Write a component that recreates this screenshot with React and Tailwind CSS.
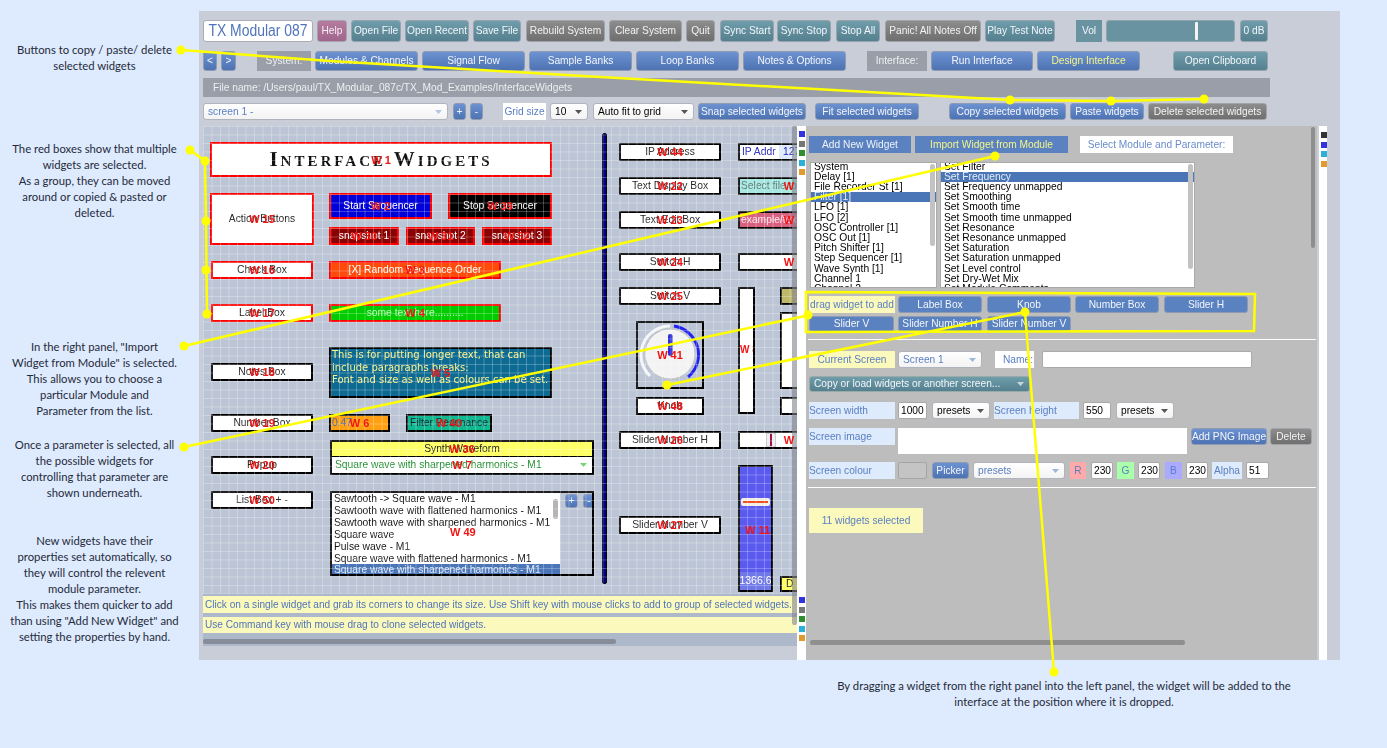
const blueBtn = "flex items-center justify-center h-full rounded-[3px] border border-[#8f9bb3] bg-linear-to-b from-[#6d92d2] to-[#4e73b3] text-[#f2f5fb] whitespace-nowrap";
const tealBtn = "flex items-center justify-center h-full rounded-[3px] border border-[#97a3ae] bg-linear-to-b from-[#6f9daa] to-[#55808f] text-[#f2f5fb] whitespace-nowrap";
const greyBtn = "flex items-center justify-center h-full rounded-[3px] border border-[#a0a3a8] bg-linear-to-b from-[#8d8d8d] to-[#6f6f6f] text-[#f2f2f2] whitespace-nowrap";
const flatBtn = "flex items-center justify-center h-full bg-[#5a82c0] text-[#eef2f9] whitespace-nowrap";
const tag = "flex items-center h-full bg-[#deebfc] text-[#5a7fc2] whitespace-nowrap";
const input = "flex items-center h-full bg-white rounded-[2px] border border-[#a9a9a9] text-black pl-[2px]";

function Arrow({ color = "#555" }) {
  return (
    <svg width="7" height="4" viewBox="0 0 7 4" className="absolute right-[5px] top-1/2 -translate-y-1/2">
      <path d="M0 0h7L3.5 4z" fill={color} />
    </svg>
  );
}

function Select({ className, text, textClass = "text-black", arrow }) {
  return (
    <div className={`relative flex items-center h-full bg-linear-to-b from-white to-[#f3f3f3] rounded-[3px] border border-[#b0b4bc] pl-[4px] whitespace-nowrap ${className} ${textClass}`}>
      {text}
      <Arrow color={arrow} />
    </div>
  );
}

// widget on the design canvas, with its red id label centred on top
function Widget({ className, label, children, labelClass = "" }) {
  return (
    <div className={`absolute flex items-center justify-center overflow-hidden whitespace-nowrap ${className}`}>
      {children}
      <span className={`absolute z-20 left-0 right-0 text-center top-1/2 -translate-y-1/2 text-[11px] font-bold leading-none whitespace-nowrap text-[#f01414] ${labelClass}`}>{label}</span>
    </div>
  );
}

const nameBox = "bg-white text-[#222] border-2 border-black rounded-[1px] w-[102px] h-[18px]";
const picked = "border-2 border-[#ff0000]";

function Canvas() {
  return (
    <div className="relative h-[468px] bg-[#bcc5d5] overflow-hidden text-[10.3px]">
      {/* left column */}
      <Widget className={`left-[7px] top-[16px] w-[342px] h-[35px] bg-white ${picked}`} label="W 1">
        <span className="font-['Liberation_Serif',serif] font-bold text-[21px] tracking-[3px] text-[#111] [font-variant:small-caps]">Interface Widgets</span>
      </Widget>
      <Widget className={`left-[7px] top-[67px] w-[104px] h-[52px] bg-white text-[#222] ${picked}`} label="W 15">Action Buttons</Widget>
      <Widget className={`left-[126px] top-[67px] w-[103px] h-[26px] bg-[#0000d8] text-white ${picked}`} label="W 2">Start Sequencer</Widget>
      <Widget className={`left-[245px] top-[67px] w-[104px] h-[26px] bg-black text-white ${picked}`} label="W 39">Stop Sequencer</Widget>
      <Widget className={`left-[126px] top-[101px] w-[70px] h-[18px] bg-[#8b0000] text-white ${picked}`} label="W 30">snapshot 1</Widget>
      <Widget className={`left-[203px] top-[101px] w-[69px] h-[18px] bg-[#8b0000] text-white ${picked}`} label="W 31">snapshot 2</Widget>
      <Widget className={`left-[279px] top-[101px] w-[70px] h-[18px] bg-[#8b0000] text-white ${picked}`} label="W 32">snapshot 3</Widget>
      <Widget className={`left-[8px] top-[135px] w-[102px] h-[18px] bg-white text-[#222] ${picked}`} label="W 16">Check Box</Widget>
      <Widget className={`left-[126px] top-[135px] w-[172px] h-[18px] bg-[#ff4a0a] text-white ${picked}`} label="W 3">[X] Random Sequence Order</Widget>
      <Widget className={`left-[8px] top-[178px] w-[102px] h-[18px] bg-white text-[#222] ${picked}`} label="W 17">Label Box</Widget>
      <Widget className={`left-[126px] top-[178px] w-[172px] h-[18px] bg-[#00cc00] text-[#b8f5b8] ${picked}`} label="W 4">some text here..........</Widget>
      <Widget className={`left-[8px] top-[237px] ${nameBox}`} label="W 18">Notes Box</Widget>
      <Widget className="left-[126px] top-[221px] w-[223px] h-[51px] bg-[#0d6a92] text-[#fdf18a] border-2 border-black !items-start !justify-start" label="W 5">
        <div className="font-['DejaVu_Sans',sans-serif] text-[10px] leading-[12.7px] pl-[1px]">
          This is for putting longer text, that can<br />include paragraphs breaks:<br />Font and size as well as colours can be set.
        </div>
      </Widget>
      <Widget className={`left-[8px] top-[288px] ${nameBox}`} label="W 19">Number Box</Widget>
      <Widget className="left-[126px] top-[288px] w-[61px] h-[18px] bg-[#ffa012] text-[#3f6fb0] border-2 border-black !justify-start" label="W 6">
        <span className="pl-[1px]">0.47</span>
      </Widget>
      <Widget className="left-[203px] top-[288px] w-[86px] h-[18px] bg-[#10b890] text-[#123] border-2 border-black" label="W 40">Filter Resonance</Widget>
      <div className="absolute left-[127px] top-[314px] w-[264px] h-[35px] border-2 border-black flex flex-col">
        <Widget className="left-0 top-0 w-full h-[15px] bg-[#ffff66] text-[#222] border-b border-black" label="W 36">Synth Waveform</Widget>
        <Widget className="left-0 top-[15px] w-full h-[16px] bg-white text-[#1f8f2f] !justify-start" label="W 7">
          <span className="pl-[3px]">Square wave with sharpened harmonics - M1</span>
          <Arrow color="#72d672" />
        </Widget>
      </div>
      <Widget className={`left-[8px] top-[330px] ${nameBox}`} label="W 20">Popup</Widget>
      <Widget className={`left-[8px] top-[365px] ${nameBox}`} label="W 50">List Box + -</Widget>
      <div className="absolute left-[127px] top-[365px] w-[264px] h-[85px] border-2 border-black bg-[#bcc5d5] overflow-hidden whitespace-nowrap">
        <div className="w-[228px] h-full bg-white text-[#111] leading-[11.9px] pl-[2px]">
          <div>Sawtooth -&gt; Square wave - M1</div>
          <div>Sawtooth wave with flattened harmonics - M1</div>
          <div>Sawtooth wave with sharpened harmonics - M1</div>
          <div>Square wave</div>
          <div>Pulse wave - M1</div>
          <div>Square wave with flattened harmonics - M1</div>
          <div className="-ml-[2px] pl-[2px] bg-[#4a76b8] text-[#dfe8f5]">Square wave with sharpened harmonics - M1</div>
        </div>
        <div className="absolute left-[221px] top-[6px] w-[5px] h-[20px] rounded-[3px] bg-[#b5b5b5]" />
        <div className={`absolute left-[233px] top-[1px] w-[13px] !h-[14px] ${blueBtn}`}>+</div>
        <div className={`absolute left-[251px] top-[1px] w-[12px] !h-[14px] ${blueBtn}`}>-</div>
      </div>
      <span className="absolute z-20 left-[247px] top-[401px] text-[11px] font-bold leading-none text-[#f01414]">W 49</span>
      <div className="absolute left-[399px] top-[7px] w-[5px] h-[451px] rounded-[2px] bg-[#000088] border border-black" />

      {/* middle column */}
      <Widget className={`left-[416px] top-[17px] ${nameBox}`} label="W 44">IP Address</Widget>
      <Widget className={`left-[416px] top-[51px] ${nameBox}`} label="W 22">Text Display Box</Widget>
      <Widget className={`left-[416px] top-[85px] ${nameBox}`} label="W 23">Text Edit Box</Widget>
      <Widget className={`left-[416px] top-[127px] ${nameBox}`} label="W 24">Switch H</Widget>
      <Widget className={`left-[416px] top-[161px] ${nameBox}`} label="W 25">Switch V</Widget>
      <Widget className="left-[433px] top-[195px] w-[68px] h-[68px] border-2 border-black" label="W 41">
        <svg width="64" height="64" viewBox="0 0 64 64" className="absolute left-0 top-0">
          <path d="M12 53A29 29 0 0 1 32 3" fill="none" stroke="#f5f6f8" strokeWidth="3" />
          <path d="M36 3A29 29 0 0 1 50 54" fill="none" stroke="#2222ee" strokeWidth="3" />
          <circle cx="32" cy="31" r="25" fill="#f3f3f3" stroke="#c4c4c4" />
          <rect x="30" y="11" width="4.5" height="22" rx="2" fill="#2a2ad8" />
        </svg>
      </Widget>
      <Widget className="left-[433px] top-[271px] w-[68px] h-[18px] bg-white text-[#222] border-2 border-black" label="W 48">Knob</Widget>
      <Widget className={`left-[416px] top-[305px] ${nameBox}`} label="W 26">Slider Number H</Widget>
      <Widget className={`left-[416px] top-[390px] ${nameBox}`} label="W 27">Slider Number V</Widget>

      {/* right column, runs off the canvas edge */}
      <Widget className="left-[535px] top-[17px] w-[100px] h-[18px] bg-white text-[#1c1cb8] border-2 border-black !justify-start" label="">
        <span className="pl-[2px] w-[39px] shrink-0">IP Addr</span><span className="bg-[#deebfc] pl-[4px] w-[40px] h-full flex items-center">127</span>
      </Widget>
      <Widget className="left-[535px] top-[51px] w-[100px] h-[18px] bg-[#a8e8e0] text-[#5b7a78] border-2 border-black !justify-start" label="W 45" labelClass="!left-[17px]">
        <span className="pl-[1px]">Select file to open</span>
      </Widget>
      <Widget className="left-[535px] top-[85px] w-[100px] h-[18px] bg-[#d8607f] text-[#fbe3ea] border-2 border-black !justify-start" label="W 46" labelClass="!left-[17px]">
        <span className="pl-[1px]">example/text</span>
      </Widget>
      <Widget className="left-[535px] top-[127px] w-[100px] h-[18px] bg-white border-2 border-black" label="W 47" labelClass="!left-[17px]" />
      <Widget className="left-[535px] top-[161px] w-[17px] h-[127px] bg-white border-2 border-black" label="W 8" labelClass="!top-[61px] !text-[10px]" />
      <Widget className="left-[577px] top-[161px] w-[60px] h-[18px] bg-[#bdb86a] border-2 border-black" label="" />
      <Widget className="left-[577px] top-[186px] w-[60px] h-[77px] bg-white border-2 border-black" label="" />
      <Widget className="left-[577px] top-[271px] w-[60px] h-[18px] bg-white border-2 border-black" label="" />
      <Widget className="left-[535px] top-[305px] w-[100px] h-[18px] bg-white border-2 border-black" label="W 10" labelClass="!left-[17px]">
        <div className="absolute left-[26px] top-0 w-[10px] h-full bg-[#eee] border border-[#ccc] flex justify-center">
          <div className="w-[1.5px] h-full bg-[#a0104f]" />
        </div>
      </Widget>
      <div className="absolute left-[535px] top-[339px] w-[35px] h-[127px] border-2 border-black bg-[#5a5af0] overflow-hidden flex flex-col">
        <div className="mt-[31px] mx-[1px] h-[9px] rounded-[2px] bg-[#f3efe6] flex items-center px-[2px]">
          <div className="w-full h-[2px] bg-[#f0501a]" />
        </div>
        <div className="mt-[66px] h-[19px] bg-[#6f78e8] text-white text-[10.5px] flex items-center justify-center">1366.6</div>
        <span className="absolute z-20 left-[5px] top-[58px] text-[11px] font-bold leading-none whitespace-nowrap text-[#f01414]">W 11</span>
      </div>
      <Widget className="left-[577px] top-[450px] w-[60px] h-[16px] bg-[#ffff66] text-[#222] border-2 border-black !justify-start" label="">
        <span className="pl-[4px]">D</span>
      </Widget>

      {/* canvas grid, drawn over the widgets */}
      <div className="absolute inset-0 z-10 pointer-events-none bg-[linear-gradient(rgba(255,255,255,0.26)_1px,transparent_1px),linear-gradient(90deg,rgba(255,255,255,0.26)_1px,transparent_1px)] bg-[size:8.5px_8.5px]" />
    </div>
  );
}

function Swatches({ colors, className }) {
  return (
    <div className={`flex flex-col gap-[3.5px] ${className}`}>
      {colors.map((c, i) => (
        <div key={i} className="w-[6px] h-[6px]" style={{ background: c }} />
      ))}
    </div>
  );
}

const modules = ["System", "Delay [1]", "File Recorder St [1]", "Filter [1]", "LFO [1]", "LFO [2]", "OSC Controller [1]", "OSC Out [1]", "Pitch Shifter [1]", "Step Sequencer [1]", "Wave Synth [1]", "Channel 1", "Channel 2"];
const params = ["Set Filter", "Set Frequency", "Set Frequency unmapped", "Set Smoothing", "Set Smooth time", "Set Smooth time unmapped", "Set Resonance", "Set Resonance unmapped", "Set Saturation", "Set Saturation unmapped", "Set Level control", "Set Dry-Wet Mix", "Set Module Comments"];

function ListBox({ items, selected, className, barClass }) {
  return (
    <div className={`relative h-full bg-white border border-[#aaa] overflow-hidden text-black text-[10.3px] leading-[10.2px] ${className}`}>
      <div className="-mt-[1.5px]">
        {items.map((t, i) => (
          <div key={t} className={i === selected ? "bg-[#4a76b8] text-[#e6edf7] pl-[3px]" : "pl-[3px]"}>{t}</div>
        ))}
      </div>
      <div className={`absolute right-[1px] top-[1px] w-[5px] rounded-[3px] bg-[#c2c2c2] ${barClass}`} />
    </div>
  );
}

function RightPanel() {
  return (
    <div className="relative w-[511px] h-full bg-[#bdbdbd] pl-[3px] pt-[10px] overflow-hidden">
      <div className="flex h-[17px]">
        <div className={`w-[102px] ${flatBtn}`}>Add New Widget</div>
        <div className={`w-[153px] ml-[4px] !text-[#f5f58a] ${flatBtn}`}>Import Widget from Module</div>
        <div className="w-[153px] ml-[12px] flex items-center justify-center bg-white text-[#6a8ccb]">Select Module and Parameter:</div>
      </div>
      <div className="flex h-[126px] mt-[9px] ml-[1px]">
        <ListBox items={modules} selected={3} className="w-[127px]" barClass="h-[82px]" />
        <ListBox items={params} selected={1} className="w-[255px] ml-[3px]" barClass="h-[105px]" />
      </div>
      <div className="flex h-[17px] mt-[8px]">
        <div className="w-[86px] flex items-center justify-center bg-[#fbf9bb] text-[#5a7fc2] whitespace-nowrap">drag widget to add</div>
        <div className={`w-[84px] ml-[3px] ${blueBtn} !bg-none !bg-[#5a82c0]`}>Label Box</div>
        <div className={`w-[84px] ml-[5px] ${blueBtn} !bg-none !bg-[#5a82c0]`}>Knob</div>
        <div className={`w-[84px] ml-[4px] ${blueBtn} !bg-none !bg-[#5a82c0]`}>Number Box</div>
        <div className={`w-[84px] ml-[5px] ${blueBtn} !bg-none !bg-[#5a82c0]`}>Slider H</div>
      </div>
      <div className="flex h-[16px] mt-[3px]">
        <div className={`w-[85px] ${blueBtn} !bg-none !bg-[#5a82c0]`}>Slider V</div>
        <div className={`w-[84px] ml-[4px] ${blueBtn} !bg-none !bg-[#5a82c0]`}>Slider Number H</div>
        <div className={`w-[84px] ml-[5px] ${blueBtn} !bg-none !bg-[#5a82c0]`}>Slider Number V</div>
      </div>
      <div className="h-[1px] w-[508px] -ml-[1px] mt-[7px] bg-white" />
      <div className="flex h-[17px] mt-[11px]">
        <div className="w-[86px] flex items-center justify-center bg-[#fbf9bb] text-[#5a7fc2]">Current Screen</div>
        <Select className="w-[84px] ml-[3px]" text="Screen 1" textClass="text-[#5a7fc2]" arrow="#9db6dc" />
        <div className="w-[39px] ml-[13px] h-full flex items-center justify-end pr-[1px] bg-white text-[#5a7fc2]">Name:</div>
        <div className="w-[210px] ml-[8px] h-full bg-white border border-[#aaa] rounded-[2px]" />
      </div>
      <div className="relative w-[221px] h-[16px] mt-[8px] flex items-center pl-[4px] rounded-[3px] border border-[#9aa] bg-linear-to-b from-[#6f9daa] to-[#55808f] text-[#f2f5fb]">
        Copy or load widgets or another screen...
        <Arrow color="#c8d8de" />
      </div>
      <div className="flex h-[17px] mt-[10px]">
        <div className={`w-[86px] ${tag}`}>Screen width</div>
        <div className={`w-[29px] ml-[3px] ${input}`}>1000</div>
        <Select className="w-[58px] ml-[5px]" text="presets" />
        <div className={`w-[85px] ml-[4px] ${tag}`}>Screen height</div>
        <div className={`w-[28px] ml-[4px] ${input}`}>550</div>
        <Select className="w-[58px] ml-[5px]" text="presets" />
      </div>
      <div className="flex h-[26px] mt-[9px]">
        <div className={`w-[86px] !h-[17px] ${tag}`}>Screen image</div>
        <div className="w-[289px] ml-[3px] h-full bg-white" />
        <div className={`w-[76px] ml-[4px] !h-[17px] ${blueBtn}`}>Add PNG Image</div>
        <div className={`w-[42px] ml-[3px] !h-[17px] ${greyBtn}`}>Delete</div>
      </div>
      <div className="flex h-[17px] mt-[8px]">
        <div className={`w-[86px] ${tag}`}>Screen colour</div>
        <div className="w-[29px] ml-[3px] h-full bg-[#c4c4c4] border border-[#a5a5a5] rounded-[2px]" />
        <div className={`w-[37px] ml-[5px] ${blueBtn}`}>Picker</div>
        <Select className="w-[92px] ml-[4px]" text="presets" textClass="text-[#5a7fc2]" arrow="#9db6dc" />
        <div className="w-[16px] ml-[5px] h-full flex items-center justify-center bg-[#ffaaaa] text-[#5a7fc2]">R</div>
        <div className={`w-[22px] ml-[5px] ${input}`}>230</div>
        <div className="w-[17px] ml-[4px] h-full flex items-center justify-center bg-[#aaffaa] text-[#5a7fc2]">G</div>
        <div className={`w-[22px] ml-[4px] ${input}`}>230</div>
        <div className="w-[17px] ml-[5px] h-full flex items-center justify-center bg-[#aaaaff] text-[#5a7fc2]">B</div>
        <div className={`w-[22px] ml-[4px] ${input}`}>230</div>
        <div className={`w-[30px] ml-[4px] justify-center ${tag}`}>Alpha</div>
        <div className={`w-[23px] ml-[4px] ${input}`}>51</div>
      </div>
      <div className="h-[1px] w-[508px] -ml-[1px] mt-[8px] bg-white" />
      <div className="w-[114px] h-[25px] mt-[20px] flex items-center justify-center bg-[#fbf9bb] text-[#5a7fc2]">11 widgets selected</div>

      <div className="absolute left-[505px] top-[1px] w-[4px] h-[121px] rounded-[2px] bg-[#8e8e8e]" />
      <div className="absolute left-[4px] top-[514px] w-[375px] h-[5px] rounded-[2px] bg-[#8f8f8f]" />
    </div>
  );
}

function AppWindow() {
  return (
    <div className="w-[1141px] h-[649px] mt-[11px] bg-[#c9cdd8] pl-[4px] pt-[9px] font-['Liberation_Sans',sans-serif] text-[10.2px] blur-[0.45px]">
      <div className="flex items-center h-[22px]">
        <div className="w-[110px] h-full flex items-center justify-center bg-white rounded-[3px] border border-[#a8acb4] text-[#4f74bb] text-[16px] whitespace-nowrap">
          <span className="inline-block scale-x-[0.87]">TX Modular 087</span>
        </div>
        <div className="w-[30px] ml-[4px] h-full flex items-center justify-center rounded-[3px] border border-[#a8a3b0] bg-linear-to-b from-[#b57aa0] to-[#a0668c] text-[#f5eef3]">Help</div>
        <div className={`w-[50px] ml-[4px] ${tealBtn}`}>Open File</div>
        <div className={`w-[64px] ml-[4px] ${tealBtn}`}>Open Recent</div>
        <div className={`w-[48px] ml-[4px] ${tealBtn}`}>Save File</div>
        <div className={`w-[79px] ml-[5px] ${greyBtn}`}>Rebuild System</div>
        <div className={`w-[73px] ml-[4px] ${greyBtn}`}>Clear System</div>
        <div className={`w-[29px] ml-[4px] ${greyBtn}`}>Quit</div>
        <div className={`w-[54px] ml-[5px] ${tealBtn}`}>Sync Start</div>
        <div className={`w-[54px] ml-[3px] ${tealBtn}`}>Sync Stop</div>
        <div className={`w-[44px] ml-[5px] ${tealBtn}`}>Stop All</div>
        <div className={`w-[96px] ml-[5px] ${greyBtn}`}>Panic! All Notes Off</div>
        <div className={`w-[70px] ml-[4px] ${tealBtn}`}>Play Test Note</div>
        <div className="w-[26px] ml-[21px] h-full flex items-center justify-center bg-[#6a93a2] text-[#f2f5fb]">Vol</div>
        <div className="relative w-[129px] ml-[4px] h-full rounded-[3px] bg-[#6a93a2] border border-[#8fa5ae]">
          <div className="absolute left-[88px] top-[1px] bottom-[1px] w-[3px] bg-[#f4f4f4] rounded-[1px]" />
        </div>
        <div className={`w-[28px] ml-[5px] ${tealBtn}`}>0 dB</div>
      </div>
      <div className="flex items-center h-[20px] mt-[9px]">
        <div className={`w-[14px] ${blueBtn}`}>&lt;</div>
        <div className={`w-[15px] ml-[4px] ${blueBtn}`}>&gt;</div>
        <div className="w-[54px] ml-[21px] h-full flex items-center justify-center bg-[#9a9ea8] text-[#eef0f3]">System:</div>
        <div className={`w-[103px] ml-[4px] ${blueBtn}`}>Modules &amp; Channels</div>
        <div className={`w-[103px] ml-[4px] ${blueBtn}`}>Signal Flow</div>
        <div className={`w-[103px] ml-[4px] ${blueBtn}`}>Sample Banks</div>
        <div className={`w-[103px] ml-[4px] ${blueBtn}`}>Loop Banks</div>
        <div className={`w-[103px] ml-[4px] ${blueBtn}`}>Notes &amp; Options</div>
        <div className="w-[60px] ml-[21px] h-full flex items-center justify-center bg-[#9a9ea8] text-[#eef0f3]">Interface:</div>
        <div className={`w-[102px] ml-[4px] ${blueBtn}`}>Run Interface</div>
        <div className={`w-[103px] ml-[4px] !text-[#f5f58a] ${blueBtn}`}>Design Interface</div>
        <div className={`w-[95px] ml-[33px] ${tealBtn}`}>Open Clipboard</div>
      </div>
      <div className="w-[1067px] h-[19px] mt-[7px] flex items-center pl-[10px] bg-[#9a9ea8] text-[#eceef2]">
        File name: /Users/paul/TX_Modular_087c/TX_Mod_Examples/InterfaceWidgets
      </div>
      <div className="flex items-center h-[17px] mt-[6px]">
        <Select className="w-[245px]" text="screen 1 -" textClass="text-[#5a7fc2]" arrow="#b5c6e3" />
        <div className={`w-[13px] ml-[5px] ${blueBtn}`}>+</div>
        <div className={`w-[13px] ml-[4px] ${blueBtn}`}>-</div>
        <div className="w-[43px] ml-[20px] h-full flex items-center justify-center bg-white text-[#5a7fc2]">Grid size</div>
        <Select className="w-[38px] ml-[4px]" text="10" />
        <Select className="w-[101px] ml-[5px]" text="Auto fit to grid" />
        <div className={`w-[108px] ml-[4px] ${blueBtn}`}>Snap selected widgets</div>
        <div className={`w-[104px] ml-[9px] ${blueBtn}`}>Fit selected widgets</div>
        <div className={`w-[117px] ml-[30px] ${blueBtn}`}>Copy selected widgets</div>
        <div className={`w-[74px] ml-[4px] ${blueBtn}`}>Paste widgets</div>
        <div className={`w-[119px] ml-[4px] ${greyBtn}`}>Delete selected widgets</div>
      </div>
      <div className="flex h-[534px] mt-[6px]">
        <div className="relative w-[594px] h-full">
          <Canvas />
          <div className="h-[52px] bg-[#adb8cb] pt-[2px] text-[#4f74bb] text-[10.1px] whitespace-nowrap overflow-hidden">
            <div className="h-[17px] flex items-center pl-[2px] bg-[#fbf9bb]">Click on a single widget and grab its corners to change its size. Use Shift key with mouse clicks to add to group of selected widgets.</div>
            <div className="h-[16px] mt-[4px] flex items-center pl-[2px] bg-[#fbf9bb]">Use Command key with mouse drag to clone selected widgets.</div>
            <div className="w-[413px] h-[5px] mt-[6px] rounded-[2px] bg-[#878c99]" />
          </div>
          {/* overlay scrollbar of the canvas */}
          <div className="absolute z-10 right-0 top-0 w-[5px] h-[499px] bg-[#7f838c]/60 rounded-[2px]" />
        </div>
        <div className="w-[9px] h-full bg-white pl-[2px] pt-[5px]">
          <Swatches colors={["#3333dd", "#777777", "#2f8f2f", "#2bb0d8", "#e09a30"]} />
          <Swatches colors={["#3333dd", "#777777", "#2f8f2f", "#2bb0d8", "#e09a30"]} className="mt-[422px]" />
        </div>
        <RightPanel />
        <div className="w-[8px] ml-[2px] h-full bg-white pl-[2px] pt-[6px]">
          <Swatches colors={["#333333", "#3333dd", "#2bb0d8", "#e09a30"]} />
        </div>
      </div>
    </div>
  );
}

const notes = "text-center text-[#1f2a3a] text-[11.3px] leading-[16px]";

export default function App() {
  return (
    <div className="relative w-full h-[748px] overflow-hidden bg-[#deeafd] font-['Lato',sans-serif] flex">
      <div className="w-[199px] shrink-0 pt-[42px] pr-[10px]">
        <p className={notes}>Buttons to copy / paste/ delete<br />selected widgets</p>
        <p className={`mt-[67px] ${notes}`}>The red boxes show that multiple<br />widgets are selected.<br />As a group, they can be moved<br />around or copied &amp; pasted or<br />deleted.</p>
        <p className={`mt-[118px] ${notes}`}>In the right panel, "Import<br />Widget from Module" is selected.<br />This allows you to choose a<br />particular Module and<br />Parameter from the list.</p>
        <p className={`mt-[18px] ${notes}`}>Once a parameter is selected, all<br />the possible widgets for<br />controlling that parameter are<br />shown underneath.</p>
        <p className={`mt-[32px] ${notes}`}>New widgets have their<br />properties set automatically, so<br />they will control the relevent<br />module parameter.<br />This makes them quicker to add<br />than using "Add New Widget" and<br />setting the properties by hand.</p>
      </div>
      <div>
        <AppWindow />
        <p className={`mt-[18px] ml-[615px] w-[500px] ${notes}`}>By dragging a widget from the right panel into the left panel, the widget will be added to the<br />interface at the position where it is dropped.</p>
      </div>
      {/* yellow callout lines */}
      <svg width="1387" height="748" viewBox="0 0 1387 748" className="absolute left-0 top-0 z-30 pointer-events-none">
        <g fill="none" stroke="#ffff00" strokeWidth="2.5">
          <polyline points="181,50 330,61 600,77 1010,100 1111,101 1204,99" />
          <polyline points="190,150 205,161 206,221 207,314" />
          <line x1="184" y1="346" x2="995" y2="156" />
          <line x1="184" y1="447" x2="810" y2="315" />
          <line x1="667" y1="385" x2="1025" y2="312" />
          <line x1="1025" y1="312" x2="1054" y2="672" />
          <polygon points="806,292 1255,294 1254,331 806,332" />
        </g>
        <g fill="#ffff00">
          <circle cx="181" cy="50" r="4.5" />
          <circle cx="1010" cy="100" r="4.5" />
          <circle cx="1111" cy="101" r="4.5" />
          <circle cx="1204" cy="99" r="4.5" />
          <circle cx="190" cy="150" r="4.5" />
          <circle cx="205" cy="161" r="4.5" />
          <circle cx="206" cy="221" r="4.5" />
          <circle cx="206" cy="270" r="4.5" />
          <circle cx="207" cy="314" r="4.5" />
          <circle cx="184" cy="346" r="4.5" />
          <circle cx="995" cy="156" r="4.5" />
          <circle cx="184" cy="447" r="4.5" />
          <circle cx="808" cy="315" r="4.5" />
          <circle cx="667" cy="385" r="4.5" />
          <circle cx="1025" cy="312" r="4.5" />
          <circle cx="1054" cy="672" r="4.5" />
        </g>
      </svg>
    </div>
  );
}
